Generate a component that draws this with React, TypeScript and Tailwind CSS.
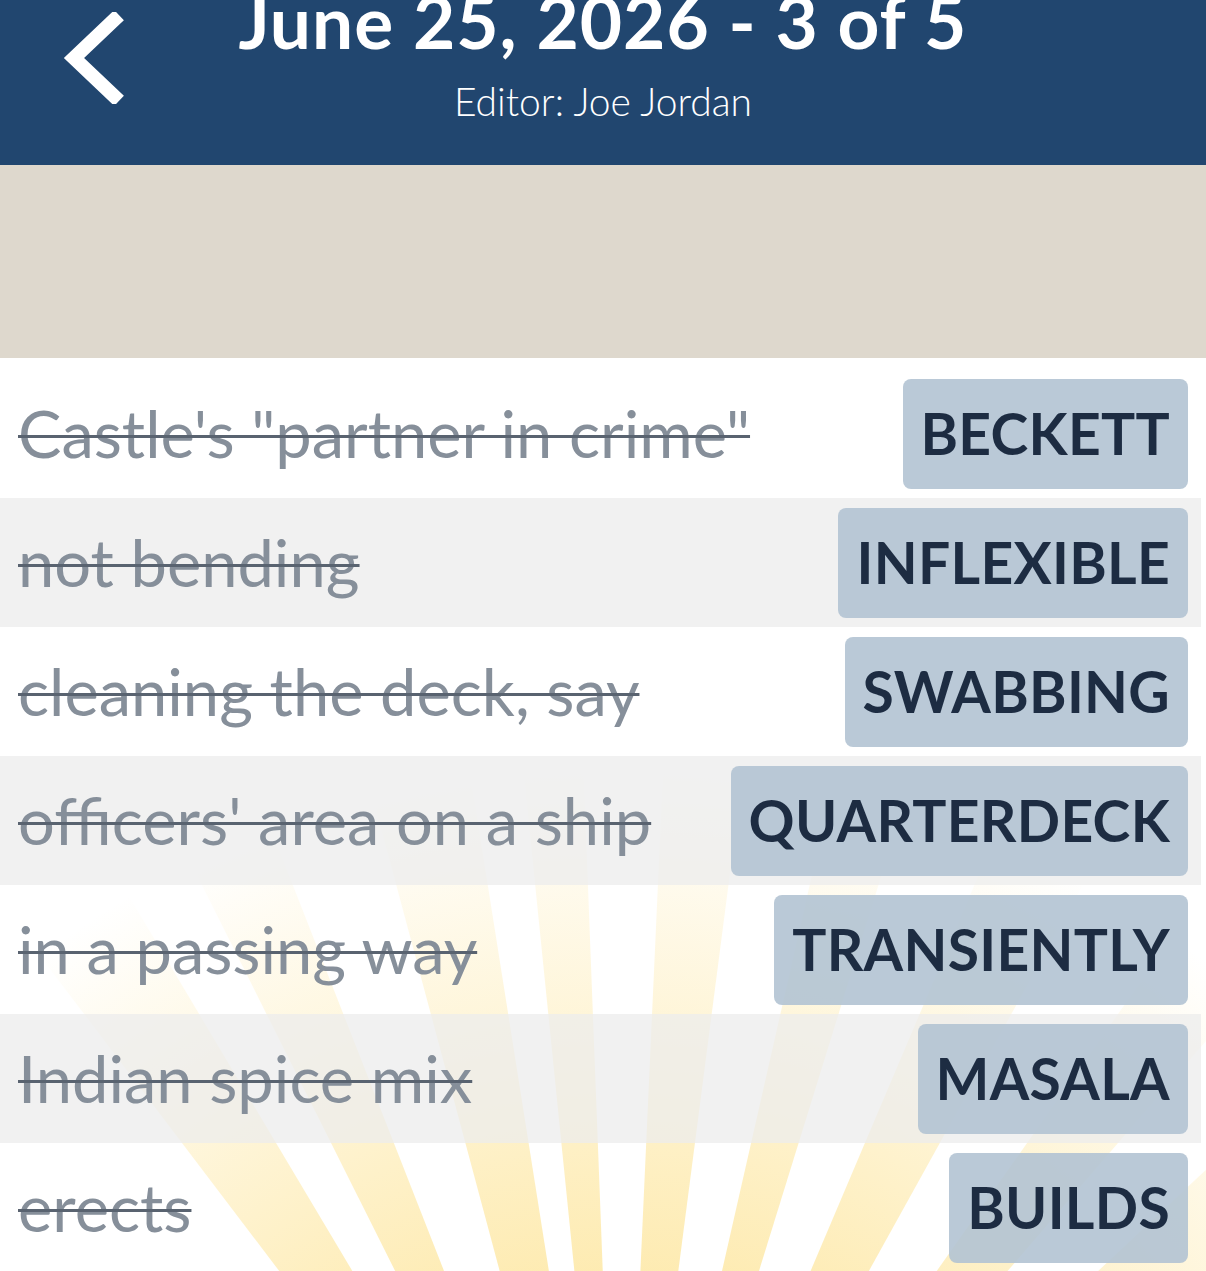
import React from "react";

const rows = [
  { clue: 'Castle\'s "partner in crime"', answer: "BECKETT" },
  { clue: "not bending", answer: "INFLEXIBLE" },
  { clue: "cleaning the deck, say", answer: "SWABBING" },
  { clue: "officers' area on a ship", answer: "QUARTERDECK" },
  { clue: "in a passing way", answer: "TRANSIENTLY" },
  { clue: "Indian spice mix", answer: "MASALA" },
  { clue: "erects", answer: "BUILDS" },
];

// angle (deg from vertical) and half-width of each ray
const rays = [
  [-34, 3.2],
  [-24, 2.6],
  [-12, 3],
  [-4, 1.8],
  [5, 2.4],
  [15, 2.2],
  [26, 3],
  [38, 2.8],
  [50, 3.2],
];

const Sunburst = () => {
  const cx = 620;
  const cy = 1720;
  const r = 1300;
  return (
    <svg
      className="pointer-events-none absolute inset-0"
      width="1206"
      height="1271"
      viewBox="0 0 1206 1271"
    >
      <defs>
        <radialGradient id="rayFade" cx={cx} cy={cy} r="960" gradientUnits="userSpaceOnUse">
          <stop offset="0.45" stopColor="#fcd660" stopOpacity="0.5" />
          <stop offset="1" stopColor="#fcd660" stopOpacity="0" />
        </radialGradient>
      </defs>
      {rays.map(([a, w], i) => {
        const a1 = ((a - w) * Math.PI) / 180;
        const a2 = ((a + w) * Math.PI) / 180;
        const p1 = `${cx + r * Math.sin(a1)},${cy - r * Math.cos(a1)}`;
        const p2 = `${cx + r * Math.sin(a2)},${cy - r * Math.cos(a2)}`;
        return <polygon key={i} points={`${cx},${cy} ${p1} ${p2}`} fill="url(#rayFade)" />;
      })}
    </svg>
  );
};

export default function App() {
  return (
    <div
      className="relative w-[1206px] h-[1271px] overflow-hidden bg-white"
      style={{ fontFamily: "Lato, 'Noto Sans', sans-serif" }}
    >
      <Sunburst />

      {/* Header */}
      <div className="relative h-[165px] bg-[#21466f] text-white">
        <svg
          className="absolute left-[60px] top-[12px]"
          width="64"
          height="92"
          viewBox="0 0 64 92"
        >
          <path
            d="M54 8 L14 46 L54 84"
            fill="none"
            stroke="white"
            strokeWidth="14"
            strokeLinecap="square"
            strokeLinejoin="miter"
          />
        </svg>
        <div className="flex flex-col items-center">
          <h1 className="mt-[-21px] text-[73px] font-bold leading-[84px] tracking-[1px]">
            June 25, 2026 - 3 of 5
          </h1>
          <p className="mt-[15px] text-[39px] leading-[46px] font-light">Editor: Joe Jordan</p>
        </div>
      </div>

      {/* Beige band */}
      <div className="relative h-[193px] bg-[#ded8cd]" />

      {/* Clue list */}
      <div className="relative w-[1201px] pt-[11px]">
        {rows.map((row, i) => (
          <div
            key={row.answer}
            className={`flex h-[129px] items-center justify-between pl-[18px] pr-[13px] ${
              i % 2 === 1 ? "bg-[#ececec]/75" : "bg-transparent"
            }`}
          >
            <span className="whitespace-nowrap text-[65px] leading-none text-[#868f9a] line-through decoration-[#596370] decoration-[2.5px]">
              {row.clue}
            </span>
            <span className="flex h-[110px] items-center rounded-[8px] bg-[#b3c3d3]/90 px-[18px] text-[57px] font-bold tracking-[0.3px] text-[#1d2c42]">
              {row.answer}
            </span>
          </div>
        ))}
      </div>
    </div>
  );
}
